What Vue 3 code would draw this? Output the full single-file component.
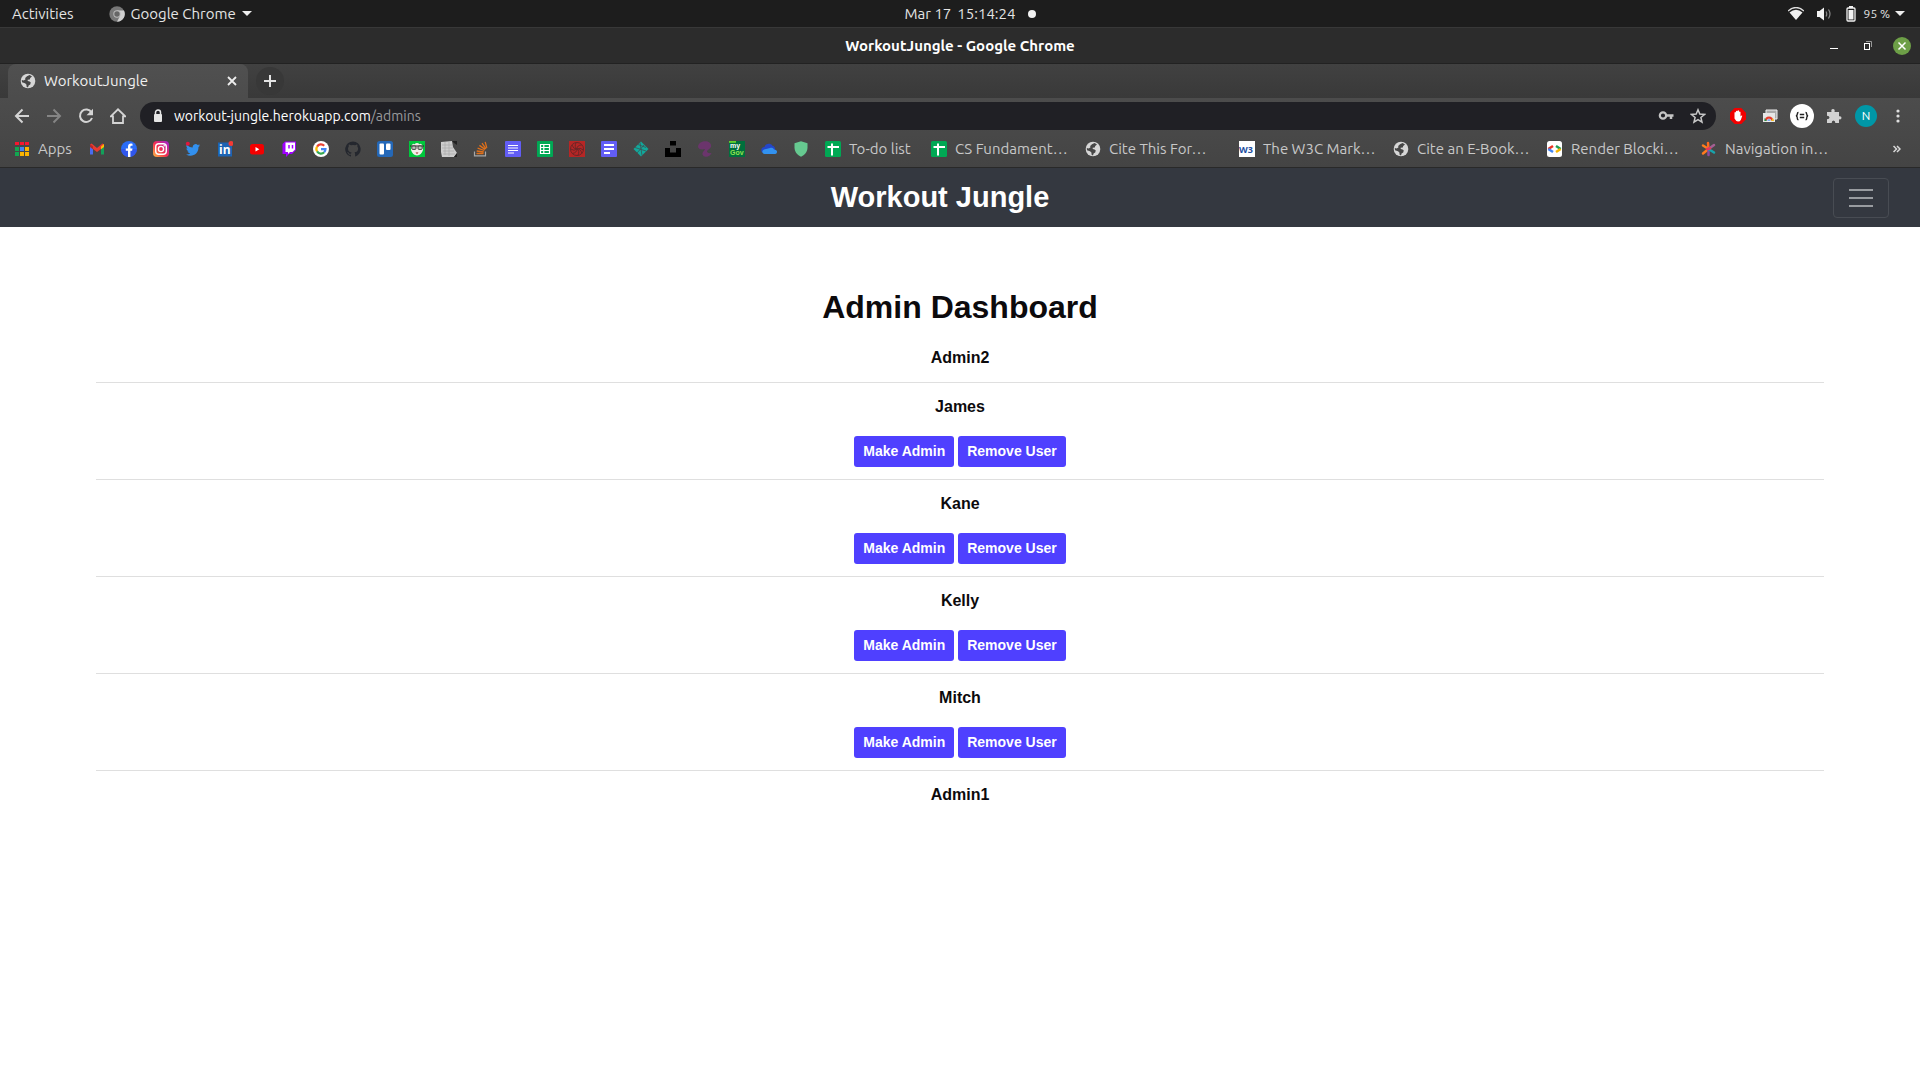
<script setup>
const globe = '<circle cx="8" cy="8" r="7.3" fill="#d6d6d6"/><path d="M7 3.2 9.6 2 12 3.6 10.2 5 9.8 6.6 7.6 6.8 7.8 8 9.6 8.4 10.8 9.6 10.2 11.4 8.6 12.6 8 14.4 6.6 13.8 6.4 11.6 5 10.2 2 9.2 1.8 7 3.6 7.6 5.4 6.4 5.2 5Z" fill="#464646"/>'
const sheetCross = '<rect width="16" height="16" rx="1.5" fill="#00a854"/><path d="M7 2.5v12M2.5 6h11.5" stroke="#fff" stroke-width="2"/>'

const shortcuts = [
  { name: 'Mail', art: '<path d="M1 4v9.5h3V7Z" fill="#4a6cf0"/><path d="M15 4v9.5h-3V7Z" fill="#12a05a"/><path d="M1 3.4 2.6 2.6 8 7l5.4-4.4L15 3.4v2.4L8 11 1 5.8Z" fill="#ea3a30"/><path d="M12 5.5 15 3v3l-3 2.2Z" fill="#fbbc04"/><path d="M1 3v3l3 2.2V5.4Z" fill="#b52a2a"/>' },
  { name: 'Facebook', art: '<circle cx="8" cy="8" r="8" fill="#2b6df6"/><path d="M0 8a8 8 0 0 0 16 0Z" fill="#3447e6" opacity=".6"/><path d="M7 16V9.8H4.8V7.4H7V5.8C7 3.8 8.2 2.6 10 2.6l1.5.1v2h-1C9.6 4.7 9.4 5.3 9.4 6v1.4h2.1l-.4 2.4H9.4V16Z" fill="#fff"/>' },
  { name: 'Instagram', art: '<defs><linearGradient id="ig" x1="0" y1="1" x2="1" y2="0"><stop offset="0" stop-color="#ffc043"/><stop offset=".45" stop-color="#f4304d"/><stop offset="1" stop-color="#9a20d8"/></linearGradient></defs><rect width="16" height="16" rx="4" fill="url(#ig)"/><rect x="2.7" y="2.7" width="10.6" height="10.6" rx="3" fill="none" stroke="#fff" stroke-width="1.4"/><circle cx="8" cy="8" r="2.6" fill="none" stroke="#fff" stroke-width="1.4"/><circle cx="11.2" cy="4.8" r=".8" fill="#fff"/>' },
  { name: 'Twitter', art: '<path d="M15 4.3c-.5.3-1 .4-1.6.5.5-.4 1-.9 1.2-1.6-.6.4-1.2.6-1.9.7a3 3 0 0 0-5 2.7C5.2 6.5 3.2 5.4 1.8 3.6c-.8 1.4-.4 3 .9 4-.5 0-1-.2-1.3-.4 0 1.5 1 2.7 2.4 3l-1.3.1c.4 1.2 1.5 2 2.8 2-1.2 1-2.8 1.4-4.3 1.2 5.5 3.2 12.5.2 12.5-7.4.6-.5 1.1-1.1 1.5-1.8Z" fill="#3290ee"/><circle cx="2.8" cy="2.8" r="2" fill="#e2173d"/>' },
  { name: 'LinkedIn', art: '<rect x="1" y="1.5" width="14" height="14" fill="#1c64b3"/><text x="2" y="13" font-size="12" font-weight="700" font-family="Open Sans, sans-serif" fill="#fff">in</text><circle cx="14" cy="2.5" r="2.5" fill="#f23b35"/>' },
  { name: 'YouTube', art: '<rect x="1" y="3" width="14" height="10.5" rx="2.5" fill="#f40000"/><path d="M6.5 6v4.5L10.3 8.2Z" fill="#fff"/>' },
  { name: 'Twitch', art: '<path d="M1.5 3 4 .5h11V9l-4 4H8l-3 3v-3H1.5Z" fill="#a000ff"/><path d="M4.5 1.5H14v7L11.5 11H9l-2 2v-2H4.5Z" fill="#fff"/><path d="M8 4v3.5M11.5 4v3.5" stroke="#a000ff" stroke-width="1.5"/>' },
  { name: 'Google', art: '<circle cx="8" cy="8" r="8" fill="#fff"/><g fill="none" stroke-width="2.2"><path d="M4.1 5.6A4.5 4.5 0 0 1 11.2 4.8" stroke="#ea4335"/><path d="M4.1 10.4A4.5 4.5 0 0 1 4.1 5.6" stroke="#fbbc05"/><path d="M11.2 11.2A4.5 4.5 0 0 1 4.1 10.4" stroke="#34a853"/><path d="M8 8.1h4.5A4.5 4.5 0 0 1 11.2 11.2" stroke="#4285f4"/></g>' },
  { name: 'GitHub', art: '<path d="M8 .4a7.8 7.8 0 0 0-2.5 15.2c.4.1.5-.2.5-.4v-1.500c-2.200.5-2.700-1-2.700-1-.3-.9-.8-1.100-.8-1.100-.7-.5.100-.5.100-.5.800.1 1.200.8 1.200.8.700 1.200 1.800.9 2.300.7 0-.5.300-.9.500-1.100-1.800-.2-3.600-.9-3.600-3.900 0-.9.300-1.500.8-2.100-.1-.2-.3-1 .1-2.100 0 0 .7-.2 2.200.8a7.400 7.400 0 0 1 3.900 0c1.500-1 2.200-.8 2.200-.8.4 1.100.2 1.900.1 2.100.5.600.8 1.200.8 2.100 0 3-1.800 3.700-3.600 3.900.3.200.6.700.6 1.400v2.200c0 .2.100.5.500.4A7.800 7.800 0 0 0 8 .4Z" fill="#24272e"/>' },
  { name: 'Trello', art: '<rect width="16" height="16" rx="2.5" fill="#2468b8"/><rect x="2.5" y="2.5" width="4.5" height="11" rx="1" fill="#fff"/><rect x="9" y="2.5" width="4.5" height="6.5" rx="1" fill="#fff"/>' },
  { name: 'Mascot', art: '<rect width="16" height="16" fill="#00c83c"/><path d="M2.5 4.5Q4 2 5.5 3.2 8 1 10.5 3.2 12 2 13.5 4.5L14 9Q12.5 14 8 14.5 3.5 14 2 9Z" fill="#f4ece8"/><path d="M1 5h14" stroke="#222"/><rect x="2.8" y="5" width="4.2" height="3.4" rx="1" fill="#b9c4b9" stroke="#333" stroke-width=".9"/><rect x="9" y="5" width="4.2" height="3.4" rx="1" fill="#b9c4b9" stroke="#333" stroke-width=".9"/><path d="M6.5 11.5h3L8 13Z" fill="#9c2020"/>' },
  { name: 'Keyboard', art: '<path d="M0 1 11 0 12 6 16 12 13 16H1L0 11Z" fill="#cdcdcd"/><path d="M1 4h10M1 7h11M2 10h11M2 13h12M4 1v13M8 1v14" stroke="#aaa" stroke-width=".7"/><path d="M11 0h5v4l-3-2ZM16 12v4h-3Z" fill="#222"/>' },
  { name: 'Stack Overflow', art: '<path d="M1.5 10.5v4.3h11v-4.3" fill="none" stroke="#a8a8a8" stroke-width="1.2"/><path d="M3.5 12.5h7M3.7 10l7 1M4.6 7.2l6.7 2.3M6.4 4.4l5.7 4M9 2.2l4 5.6M12.2.8l1.6 6" stroke="#e0701a" stroke-width="1.3"/>' },
  { name: 'Docs', art: '<rect width="16" height="16" rx="1" fill="#625df5"/><path d="M3 4.5h10M3 7h10M3 9.5h10M3 12h6" stroke="#fff" stroke-width="1.2"/>' },
  { name: 'Sheets', art: '<rect width="16" height="16" rx="1" fill="#00a854"/><path d="M3.5 3.5h9v9h-9ZM3.5 6.5h9M3.5 9.5h9M6.8 3.5v9" stroke="#fff" stroke-width="1.2" fill="none"/>' },
  { name: 'Swirl', art: '<rect width="16" height="16" fill="#b62625"/><g fill="none" stroke="#6b2527"><circle cx="8" cy="8" r="6.5"/><path d="M8 8Q5 6 7 1.7M8 8Q8 4 13 3.9M8 8q3-2 6.4 1M8 8q3 2 1 6.3M8 8q0 3.5-4.5 4.5M8 8Q5 10.5 1.7 8M8 8Q4 8 3 4M8 8q4 0 5 4.5"/></g>' },
  { name: 'Forms', art: '<rect width="16" height="16" rx="1" fill="#625df5"/><path d="M3 4h10M3 8h10M3 12h6" stroke="#fff" stroke-width="2"/>' },
  { name: 'Netlify', art: '<path d="M8 .5 15.5 8 8 15.5.5 8Z" fill="#12a89b"/><path d="M2 6.5 13 10M5 3.5l8 3M7 1.5l2 13M11 4l-7 8" stroke="#3e5254" stroke-width=".8"/>' },
  { name: 'Unsplash', art: '<path d="M5 0h6v4.5H5ZM0 7h5v4.5h6V7h5v9H0Z" fill="#000"/>' },
  { name: 'Snail', art: '<path d="M1 5.5C1.5 2 5 .3 8.5.3c4 0 6 2.700 5.500 5.200-.5 2.200-3 3-4 4.500-.5 1.500 2 2.500 4.500 2-1 2.500-3.500 4-6 3.700-2.500-.3-3.500-2-3-3.700.3-1.500 2.500-2.500 2.500-4C5 9 1 8.500 1 5.500Z" fill="#6b356c"/>' },
  { name: 'myGov', art: '<rect width="16" height="16" fill="#00703c"/><rect width="7" height="1.8" fill="#62d12d"/><text x="1" y="6.5" font-size="7" font-weight="700" font-family="Liberation Sans, sans-serif" fill="#fff">my</text><text x="1" y="14.4" font-size="7" font-weight="700" font-family="Liberation Sans, sans-serif" fill="#92e34d">Gov</text>' },
  { name: 'OneDrive', art: '<path d="M1 11.5C-1 8 1.5 6 3.5 6c1-3.5 6-4.5 8-1.2C13 5 14.5 6.5 14 9Z" fill="#2446c8"/><path d="M3.5 13C1 12.5.5 9.5 3 8.5L9 7c2-.5 3.5.3 4 1.5 2.5.2 3.5 1.5 2.8 3.2-.4 1-1.3 1.3-2.3 1.3Z" fill="#3292f0"/>' },
  { name: 'Shield', art: '<path d="M8 .3 14.5 2.3v4.2c0 4.500-3 7.500-6.500 9.300C4.500 14 1.500 11 1.500 6.500V2.300Z" fill="#66c990"/>' }
]

const bookmarks = [
  { label: 'To-do list', art: sheetCross, compact: true },
  { label: 'CS Fundament…', art: sheetCross },
  { label: 'Cite This For…', art: globe },
  { label: 'The W3C Mark…', art: '<rect width="16" height="16" fill="#fff"/><text x="0" y="12" font-size="9" font-weight="700" font-family="Open Sans, sans-serif" fill="#1d4ea1">W3</text>' },
  { label: 'Cite an E-Book…', art: globe },
  { label: 'Render Blocki…', art: '<rect width="15" height="16" rx="2.5" fill="#fff"/><g fill="none" stroke-width="2.5"><path d="M1.3 8 6 5" stroke="#ea3323"/><path d="m1.3 8 4.7 3" stroke="#4285f4"/><path d="M9 5 13.7 8" stroke="#1f9d55"/><path d="m13.7 8-4.700 3" stroke="#f7b500"/></g>' },
  { label: 'Navigation in…', art: '<g fill="none" stroke-width="2.5" stroke-linecap="round"><path d="M7.5 8 7 2" stroke="#ff6a1f"/><path d="M7.5 8 2 4.5M7.5 8 2 12.5" stroke="#ff7c1d"/><path d="M7.5 8v6" stroke="#8b4c9f"/><path d="m7.5 8 5.5-4" stroke="#a36094"/><path d="m7.5 8 5.5 3.5" stroke="#18a4ac"/><path d="m6 8 3-.5" stroke="#e9345a"/></g>' }
]

const users = [
  { name: 'Admin2', admin: true },
  { name: 'James' },
  { name: 'Kane' },
  { name: 'Kelly' },
  { name: 'Mitch' },
  { name: 'Admin1', admin: true }
]
</script>

<template>
  <div class="desktop">
    <header class="system-bar">
      <div class="system-left">
        <span>Activities</span>
        <span class="app-menu">
          <svg width="16" height="16" viewBox="0 0 16 16"><circle cx="8" cy="8" r="7.7" fill="#777" /><path d="M8 4.5h7A7.7 7.7 0 0 1 8 15.7L11 10Z" fill="#d0d0d0" /><circle cx="8" cy="8" r="3.7" fill="#bbb" /><circle cx="8" cy="8" r="2.7" fill="#666" /></svg>
          Google Chrome
          <i class="caret"></i>
        </span>
      </div>
      <div class="clock"><span>Mar 17</span><span>15:14:24</span><i class="dot"></i></div>
      <div class="system-right">
        <svg width="16" height="14" viewBox="0 0 16 14"><path d="M0 4Q8-3 16 4" fill="none" stroke="#ddd" stroke-width="1.3" /><path d="M1.5 5.5Q8 0 14.5 5.5L8 13Z" fill="#f2f2f2" /></svg>
        <svg class="volume" width="16" height="14" viewBox="0 0 16 14"><path d="M1 4h2.5L8 .5v13L3.5 10H1Z" fill="#f2f2f2" /><path d="M10 4.5q1.5 2.5 0 5M12.5 2.5q3 4.5 0 9" fill="none" stroke="#888" stroke-width="1.2" /></svg>
        <svg width="10" height="16" viewBox="0 0 10 16"><rect x="1" y="2" width="8" height="13" rx="1" fill="none" stroke="#f2f2f2" stroke-width="1.3" /><path d="M3 0h4v2H3ZM2.5 4h5v9.5h-5Z" fill="#f2f2f2" /></svg>
        <span class="percent">95 %</span>
        <i class="caret"></i>
      </div>
    </header>

    <div class="title-bar">
      <span class="window-title">WorkoutJungle - Google Chrome</span>
      <div class="window-buttons">
        <button aria-label="Minimise"><svg width="18" height="18" viewBox="0 0 18 18"><path d="M5 11.5h8" stroke="#fff" /></svg></button>
        <button aria-label="Restore"><svg width="18" height="18" viewBox="0 0 18 18"><rect x="5.5" y="6.5" width="5" height="6" fill="none" stroke="#fff" /><path d="M7 4.5h5.5V10" fill="none" stroke="#999" /></svg></button>
        <button aria-label="Close"><svg width="18" height="18" viewBox="0 0 18 18"><circle cx="9" cy="9" r="9" fill="#6d9f47" /><path d="m5.5 5.5 7 7m0-7-7 7" stroke="#fff" stroke-width="1.5" /></svg></button>
      </div>
    </div>

    <div class="tab-strip">
      <div class="tab">
        <svg width="16" height="16" viewBox="0 0 16 16" v-html="globe"></svg>
        <span class="tab-title">WorkoutJungle</span>
        <button aria-label="Close tab"><svg width="10" height="10" viewBox="0 0 10 10"><path d="m1 1 8 8m0-8-8 8" stroke="#eee" stroke-width="1.8" /></svg></button>
      </div>
      <button class="new-tab" aria-label="New tab"><svg width="12" height="12" viewBox="0 0 12 12"><path d="M6 0v12M0 6h12" stroke="#e4e4e4" stroke-width="2" /></svg></button>
    </div>

    <div class="toolbar">
      <div class="nav-buttons">
        <button aria-label="Back"><svg width="16" height="16" viewBox="0 0 16 16"><path d="M15 8H2m6.500-6.500L2 8l6.500 6.500" fill="none" stroke="#d4d4d4" stroke-width="2" /></svg></button>
        <button aria-label="Forward"><svg width="16" height="16" viewBox="0 0 16 16"><path d="M1 8h13M7.5 1.5 14 8l-6.500 6.500" fill="none" stroke="#858585" stroke-width="2" /></svg></button>
        <button aria-label="Reload"><svg width="16" height="16" viewBox="0 0 16 16"><path d="M13.5 4.5A6.2 6.2 0 1 0 14 10" fill="none" stroke="#d4d4d4" stroke-width="2" /><path d="M15 .8v6.5H8.5Z" fill="#d4d4d4" /></svg></button>
        <button aria-label="Home"><svg width="16" height="16" viewBox="0 0 16 16"><path d="M.8 8.3 8 1.3l7.2 7H13V15H3V8.3Z" fill="none" stroke="#d4d4d4" stroke-width="1.8" /></svg></button>
      </div>
      <div class="address">
        <svg width="10" height="14" viewBox="0 0 10 14"><path d="M2.5 6V3.5a2.5 2.5 0 0 1 5 0V6" fill="none" stroke="#e6e6e6" stroke-width="1.5" /><rect x="1" y="5" width="8" height="8" rx="1" fill="#e6e6e6" /></svg>
        <a class="url" href="#">workout-jungle.herokuapp.com<span>/admins</span></a>
        <svg width="16" height="16" viewBox="0 0 16 16"><circle cx="5" cy="7.5" r="3.2" fill="none" stroke="#c4c4c4" stroke-width="2.2" /><path d="M8 7.5h7.5M13 7.5V11" stroke="#c4c4c4" stroke-width="2.5" /></svg>
        <svg width="16" height="16" viewBox="0 0 16 16"><path d="m8 1.8 1.8 4.3 4.7.4-3.600 3 1.100 4.600-4-2.500-4 2.500 1.100-4.600-3.600-3 4.700-.4Z" fill="none" stroke="#c8c8c8" stroke-width="1.5" /></svg>
      </div>
      <div class="extensions">
        <button aria-label="Blocker"><svg width="16" height="16" viewBox="0 0 16 16"><path d="M4.7 0h6.6L16 4.7v6.6L11.3 16H4.7L0 11.3V4.7Z" fill="#f20000" /><path d="M4.5 8V4.5q.7-.8 1.4 0V3.3q.8-1 1.6 0v-.6q.8-1 1.6 0V4q.7-.8 1.4 0v4.5q1-1.5 1.8-.8L10.8 12Q10 13.5 8 13.5T4.5 10.5Z" fill="#fff" /></svg></button>
        <button aria-label="Windows"><svg width="16" height="16" viewBox="0 0 16 16"><path d="M4 2h11v9H4Z" fill="#aaa" stroke="#eee" /><path d="M1 5h12v9H1Z" fill="#e6e6e6" /><path d="M2.5 13A4.5 4.5 0 0 1 11.5 13Z" fill="#e53b2d" /><path d="M2.5 10 5 13H2.5Z" fill="#169c4a" /><path d="M9 13l2-3 1 3Z" fill="#f4bd19" /><path d="M5 13a2 2 0 0 1 4 0Z" fill="#4285f4" stroke="#fff" stroke-width=".6" /></svg></button>
        <button aria-label="Formatter"><svg width="24" height="24" viewBox="0 0 24 24"><circle cx="12" cy="12" r="12" fill="#fff" /><path d="M8.5 8.5Q7.3 8.5 7.3 10T6 12q1.3 0 1.3 2t1.2 1.5M15.5 8.5q1.2 0 1.2 1.5T18 12q-1.3 0-1.3 2t-1.2 1.5M9.8 10.5h4.4M9.8 13.5h4.4" fill="none" stroke="#222" stroke-width="1.4" /></svg></button>
        <button aria-label="Extensions"><svg width="16" height="16" viewBox="0 0 16 16"><path d="M1 4h4.5q-.8-3 1.5-3t1.5 3H13v4.3q2.5-.6 2.5 1.5T13 11.3V15H9.3q0-2.5-1.8-2.5T5.7 15H1v-3.7q2.5 0 2.5-1.8T1 7.7Z" fill="#d2d2d2" /></svg></button>
        <button class="avatar">N</button>
        <button aria-label="Menu"><svg width="16" height="16" viewBox="0 0 16 16"><g fill="#dedede"><circle cx="8" cy="3" r="1.6" /><circle cx="8" cy="8" r="1.6" /><circle cx="8" cy="13" r="1.6" /></g></svg></button>
      </div>
    </div>

    <nav class="bookmark-bar" aria-label="Bookmarks">
      <a class="apps" href="#">
        <svg width="14" height="14" viewBox="0 0 14 14"><path d="M0 0h4v3H0ZM5 0h4v3H5ZM10 0h4v3h-4Z" fill="#f8152f" /><path d="M0 5h4v4H0ZM0 10h4v4H0Z" fill="#12a750" /><path d="M5 5h4v4H5Z" fill="#4285f4" /><path d="M10 5h4v4h-4ZM5 10h4v4H5ZM10 10h4v4h-4Z" fill="#fbb400" /></svg>
        <span>Apps</span>
      </a>
      <a v-for="s in shortcuts" :key="s.name" href="#" :aria-label="s.name">
        <svg width="16" height="16" viewBox="0 0 16 16" v-html="s.art"></svg>
      </a>
      <a v-for="b in bookmarks" :key="b.label" class="bookmark" :class="{ compact: b.compact }" href="#">
        <svg width="16" height="16" viewBox="0 0 16 16" v-html="b.art"></svg>
        <span>{{ b.label }}</span>
      </a>
      <button class="overflow" aria-label="More bookmarks"><svg width="8" height="8" viewBox="0 0 8 8"><path d="m.5 1 3 3-3 3m3.500-6 3 3-3 3" fill="none" stroke="#d8d8d8" stroke-width="1.5" /></svg></button>
    </nav>

    <div class="site-nav">
      <a class="brand" href="#">Workout Jungle</a>
      <button class="toggler" aria-label="Toggle navigation"><i></i><i></i><i></i></button>
    </div>

    <main>
      <h1>Admin Dashboard</h1>
      <ul class="users">
        <li v-for="u in users" :key="u.name">
          <p>{{ u.name }}</p>
          <div v-if="!u.admin" class="actions">
            <button>Make Admin</button>
            <button>Remove User</button>
          </div>
        </li>
      </ul>
    </main>
  </div>
</template>

<style>
body {
  margin: 0;
  background: #fff;
}
</style>

<style scoped>
.desktop {
  font-family: Ubuntu, "Noto Sans", sans-serif;
  font-size: 15px;
  line-height: 20px;
  color: #e4e4e4;
}
.desktop * {
  box-sizing: border-box;
}
svg {
  display: block;
  flex: none;
}
button {
  display: flex;
  align-items: center;
  justify-content: center;
  padding: 0;
  border: 0;
  background: none;
  color: inherit;
  font: inherit;
}
a {
  color: inherit;
  text-decoration: none;
}
.caret {
  border: 5px solid transparent;
  border-top-color: #eee;
  border-bottom: 0;
}
.system-bar {
  display: grid;
  grid-template-columns: 1fr auto 1fr;
  align-items: center;
  height: 28px;
  padding: 0 15px 0 12px;
  background: #1d1d1d;
  border-bottom: 1px solid #383838;
}
.system-left,
.app-menu,
.clock,
.system-right {
  display: flex;
  align-items: center;
}
.system-left {
  gap: 35px;
}
.app-menu {
  gap: 6px;
}
.clock {
  gap: 6px;
  padding-left: 24px;
}
.dot {
  width: 8px;
  height: 8px;
  margin-left: 7px;
  border-radius: 50%;
  background: #f2f2f2;
}
.system-right {
  justify-content: flex-end;
}
.volume {
  margin: 0 14px 0 12px;
}
.percent {
  margin: 0 5px 0 8px;
  font-size: 12px;
}
.title-bar {
  display: grid;
  grid-template-columns: 1fr auto 1fr;
  align-items: center;
  height: 36px;
  padding: 0 9px;
  background: #2c2c2c;
  border-bottom: 1px solid #222;
}
.window-title {
  grid-column: 2;
  font-weight: 700;
  color: #fff;
}
.window-buttons {
  display: flex;
  justify-content: flex-end;
  gap: 16px;
}
.tab-strip {
  display: flex;
  height: 34px;
  padding-left: 8px;
  background: linear-gradient(#414141, #393939);
}
.tab {
  display: flex;
  align-items: center;
  gap: 8px;
  width: 240px;
  padding: 0 11px 0 12px;
  border-radius: 8px 8px 0 0;
  background: linear-gradient(#505050, #4c4c4c);
  color: #f0f0f0;
}
.tab-title {
  flex: 1;
}
.new-tab {
  width: 28px;
  height: 28px;
  margin: 3px 0 0 8px;
  border-radius: 50%;
  background: #383838;
}
.toolbar {
  display: flex;
  align-items: center;
  height: 36px;
  padding: 0 14px;
  background: linear-gradient(#4c4c4c, #484848);
}
.nav-buttons,
.extensions {
  display: flex;
  align-items: center;
  gap: 16px;
}
.address {
  display: flex;
  flex: 1;
  align-items: center;
  gap: 16px;
  height: 28px;
  margin: 0 14px;
  padding: 0 10px 0 13px;
  border-radius: 14px;
  background: #202025;
}
.url {
  flex: 1;
  margin-left: -5px;
  color: #fff;
  font-size: 14px;
}
.url span {
  color: #9a9a9c;
}
.extensions button {
  width: 16px;
}
.extensions .avatar {
  width: 22px;
  height: 22px;
  margin: 0 -3px;
  border-radius: 50%;
  background: #0097a7;
  color: #fff;
  font-size: 12px;
}
.bookmark-bar {
  display: flex;
  align-items: center;
  gap: 16px;
  height: 34px;
  padding: 0 19px 4px 15px;
  background: linear-gradient(#484848, #444);
  border-bottom: 1px solid #292929;
  color: #c8c8c8;
}
.apps {
  display: flex;
  align-items: center;
  gap: 9px;
  width: 58px;
}
.bookmark {
  display: flex;
  align-items: center;
  gap: 8px;
  width: 138px;
  white-space: nowrap;
}
.bookmark.compact {
  width: 90px;
}
.overflow {
  margin-left: auto;
}
.site-nav {
  display: flex;
  align-items: center;
  height: 59px;
  padding: 0 31px 0 47px;
  background: #343840;
  font-family: "Liberation Sans", Arial, sans-serif;
}
.brand {
  flex: 1;
  padding-bottom: 2px;
  color: #fff;
  font-size: 29px;
  font-weight: 700;
  line-height: 40px;
  text-align: center;
}
.toggler {
  flex-direction: column;
  gap: 6px;
  width: 56px;
  height: 40px;
  border: 1px solid #484c53;
  border-radius: 4px;
}
.toggler i {
  width: 24px;
  height: 2px;
  background: #999ca0;
}
main {
  padding: 61px 5% 0;
  color: #0c0a0c;
  text-align: center;
  font-family: "Liberation Sans", Arial, sans-serif;
  font-weight: 700;
}
h1 {
  margin: 0 0 7px;
  font-size: 32px;
  line-height: 39px;
}
.users {
  margin: 0;
  padding: 0;
  list-style: none;
}
.users li {
  padding: 12px 0;
  border-bottom: 1px solid #dfdfdf;
}
.users li:last-child {
  border-bottom: 0;
}
.users p {
  margin: 0;
  font-size: 16px;
  line-height: 24px;
}
.actions {
  display: flex;
  justify-content: center;
  gap: 4px;
  margin-top: 17px;
}
.actions button {
  height: 31px;
  padding: 0 9px 2px;
  border-radius: 3px;
  background: #4f40ff;
  color: #fff;
  font-size: 14px;
  font-weight: 700;
}
</style>
